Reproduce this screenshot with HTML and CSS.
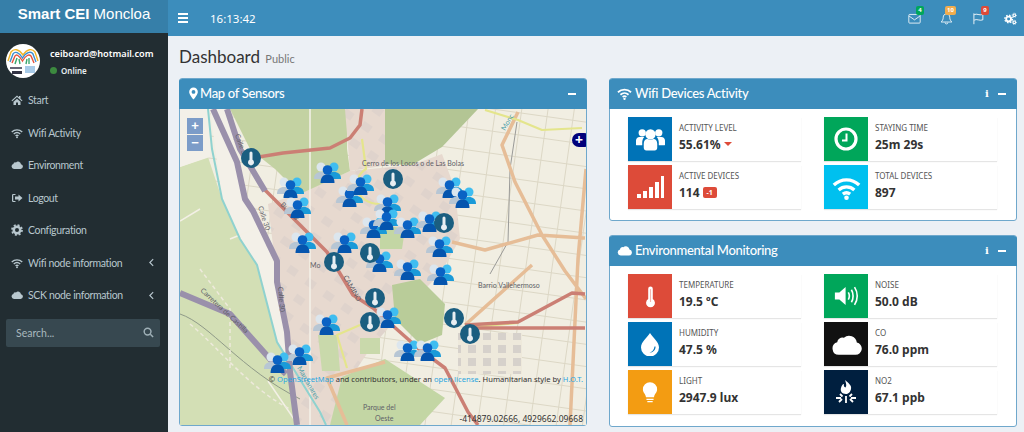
FILE: index.html
```html
<!DOCTYPE html>
<html lang="en">

<head>
    <meta charset="UTF-8">
    <meta name="viewport" content="width=device-width, initial-scale=1.0">
    <title>Smart CEI Moncloa</title>
    <link rel="stylesheet" href="styles.css">
</head>

<body>
    <!-- icon set -->
    <svg class="icon-defs" aria-hidden="true">
        <symbol id="i-home" viewBox="0 0 24 24"><path d="M12 3 1 13l1.500 1.600L12 6.200l9.500 8.400L23 13l-4-3.600V4h-3v2.700zM5 15.500V22h5v-5h4v5h5v-6.500l-7-6.200z" /></symbol>
        <symbol id="i-wifi" viewBox="0 0 24 24"><g fill="none" stroke="currentColor" stroke-width="2.800"><path d="M1.500 10C7.500 4.300 16.500 4.300 22.500 10" /><path d="M5.500 14c3.700-3.300 9.300-3.300 13 0" /><path d="M9 17.500c1.800-1.400 4.200-1.400 6 0" /></g><circle cx="12" cy="20.500" r="1.900" /></symbol>
        <symbol id="i-cloud" viewBox="0 0 24 24"><path d="M6 20a5 5 0 0 1-1.200-9.800A4 4 0 0 1 10 6.800 6 6 0 0 1 20 10.500 4.800 4.800 0 0 1 19 20z" /></symbol>
        <symbol id="i-logout" viewBox="0 0 24 24"><path d="M9 4H4.500A2.500 2.500 0 0 0 2 6.500v11A2.500 2.500 0 0 0 4.500 20H9v-2.200H4.500V6.200H9z" /><path d="M15 5l8 7-8 7v-4H8V9h7z" /></symbol>
        <symbol id="i-gear" viewBox="0 0 24 24"><circle cx="12" cy="12" r="6.500" fill="none" stroke="currentColor" stroke-width="5" /><circle cx="12" cy="12" r="10" fill="none" stroke="currentColor" stroke-width="3.500" stroke-dasharray="4 3.850" /></symbol>
        <symbol id="i-gears" viewBox="0 0 24 24"><circle cx="8.500" cy="13" r="4.500" fill="none" stroke="currentColor" stroke-width="3.500" /><circle cx="8.500" cy="13" r="7" fill="none" stroke="currentColor" stroke-width="2.500" stroke-dasharray="2.800 2.700" /><circle cx="19" cy="6" r="2.400" fill="none" stroke="currentColor" stroke-width="2" /><circle cx="19" cy="6" r="4" fill="none" stroke="currentColor" stroke-width="1.500" stroke-dasharray="1.500 1.640" /><circle cx="19" cy="19" r="2.400" fill="none" stroke="currentColor" stroke-width="2" /><circle cx="19" cy="19" r="4" fill="none" stroke="currentColor" stroke-width="1.500" stroke-dasharray="1.500 1.640" /></symbol>
        <symbol id="i-envelope" viewBox="0 0 24 24"><g fill="none" stroke="currentColor" stroke-width="1.500"><rect x="1.500" y="4.500" width="21" height="16" rx="1.500" /><path d="M2 7.500l10 7 10-7" /></g></symbol>
        <symbol id="i-bell" viewBox="0 0 24 24"><g fill="none" stroke="currentColor" stroke-width="1.500"><path d="M12 3.500c-4 0-6 3-6 6 0 5-2 7-4 9h20c-2-2-4-4-4-9 0-3-2-6-6-6z" /><path d="M9.500 19.500a2.500 2.500 0 0 0 5 0" /></g></symbol>
        <symbol id="i-flag" viewBox="0 0 24 24"><g fill="none" stroke="currentColor" stroke-width="1.600"><path d="M3.500 2.500v20" /><path d="M4 5c5-3 9 2 16-.5v10c-6 2.500-11-2.500-16 .5" /></g></symbol>
        <symbol id="i-marker" viewBox="0 0 24 24"><path fill-rule="evenodd" d="M12 1a8 8 0 0 0-8 8c0 5 8 14 8 14s8-9 8-14a8 8 0 0 0-8-8zm0 11.500a3.500 3.500 0 1 1 0-7 3.500 3.500 0 0 1 0 7z" /></symbol>
        <symbol id="i-users" viewBox="0 0 28 24"><circle cx="6" cy="5.500" r="3.500" /><circle cx="22" cy="5.500" r="3.500" /><path d="M0 17v-4c0-2 1.500-3.500 3.500-3.500H8C6.500 11 6 13 6 15v2.500H1C.4 17.500 0 17.300 0 17zM28 17v-4c0-2-1.500-3.500-3.500-3.500H20c1.500 1.500 2 3.500 2 5.500v2.500h5c.6 0 1-.2 1-.5z" /><circle cx="14" cy="7" r="5" /><path d="M7.500 16c0-2.500 1.500-4.500 3.500-4.500 1.800 1 4.200 1 6 0 2 0 3.500 2 3.500 4.500v4c0 1.500-1 2.500-2.500 2.500h-8C8.500 22.500 7.500 21.500 7.500 20z" /></symbol>
        <symbol id="i-clock" viewBox="0 0 24 24"><circle cx="12" cy="12" r="10" fill="none" stroke="currentColor" stroke-width="3.200" /><path d="M12.500 6.500v7H8" fill="none" stroke="currentColor" stroke-width="2" /></symbol>
        <symbol id="i-signal" viewBox="0 0 28 24"><rect x="1" y="19" width="4" height="4" /><rect x="7" y="16" width="4" height="7" /><rect x="13" y="12" width="4" height="11" /><rect x="19" y="7" width="4" height="16" /><rect x="25" y="1" width="3" height="22" /></symbol>
        <symbol id="i-thermo" viewBox="0 0 12 24"><path d="M6 1a2.500 2.500 0 0 0-2.500 2.500v11.300a4.800 4.800 0 1 0 5 0V3.500A2.500 2.500 0 0 0 6 1z" /><path d="M6 4v14" stroke="#f2b6ae" stroke-width="1.200" /></symbol>
        <symbol id="i-volume" viewBox="0 0 28 24"><path d="M1 8h5l7-6v20l-7-6H1z" /><g fill="none" stroke="currentColor" stroke-width="1.800"><path d="M16 8c1.500 2.500 1.500 5.500 0 8" /><path d="M19.500 5c2.500 4 2.500 10 0 14" /><path d="M23 2c4 6 4 14 0 20" /></g></symbol>
        <symbol id="i-tint" viewBox="0 0 20 24"><path fill-rule="evenodd" d="M10 1C7 6 1 10 1 15.500a9 9 0 0 0 18 0C19 10 13 6 10 1zM15.500 14.500c.3 3-2 6-6 6.300 3-1 4.700-3.300 5-6.300z" /></symbol>
        <symbol id="i-bulb" viewBox="0 0 18 24"><path d="M9 1a8 8 0 0 0-8 8c0 4 3 5 3.500 9h9C14 14 17 13 17 9a8 8 0 0 0-8-8zM5 19.500h8V21H5zM6 22h6v1.500H6z" /></symbol>
        <symbol id="i-fire" viewBox="0 0 24 24"><path d="M11 0c3 3 7 5 6 9-.5 2.500-2 5-5 5-4 0-6-3-5-6 .5-2 1.500-4 3-4-.5 1.500 0 3 1.500 3.500C13 6 12 3 11 0z" /><g fill="none" stroke="currentColor" stroke-width="1.800"><path d="M12 16v7" /><path d="M6 14l2.500 2.500M18 14l-2.500 2.500" /><path d="M2 18h5M17 18h5" /><path d="M5 22l3-3M19 22l-3-3" /></g></symbol>
        <symbol id="i-people" viewBox="0 0 27 21">
            <circle cx="7" cy="5" r="4.500" fill="#dce6ee" /><path d="M0 17c0-5 3-7 7-7s7 2 7 7z" fill="#b7c6d4" />
            <circle cx="20" cy="5" r="4.500" fill="#3fbdf0" /><path d="M13 17c0-5 3-7 7-7s7 2 7 7z" fill="#1a9ad8" />
            <circle cx="13.500" cy="8" r="4.800" fill="#0a62c4" /><path d="M6.500 21c0-6 3-8.500 7-8.500s7 2.500 7 8.500z" fill="#0555ae" />
        </symbol>
        <symbol id="i-pin" viewBox="0 0 20 20">
            <circle cx="10" cy="10" r="10" fill="#1b5e80" />
            <path d="M10 3.500A1.500 1.500 0 0 0 8.500 5v6.800a3 3 0 1 0 3 0V5A1.500 1.500 0 0 0 10 3.500z" fill="#e8eef2" />
        </symbol>
    </svg>

    <div class="page">
        <aside class="sidebar">
            <div class="logo"><b>Smart CEI</b> Moncloa</div>
            <div class="user">
                <svg class="avatar" viewBox="0 0 34 34">
                    <circle cx="17" cy="17" r="17" fill="#fff" />
                    <g fill="none" stroke-width="1.400">
                        <path d="M2 17 5 8C8 4 13 5 17 11 21 5 26 4 29 8L32 17" stroke="#f0b429" />
                        <path d="M4 18 7 10C9 7 13 8 16.500 14 20 8 25 7 27 10L30 18" stroke="#3b8fd0" />
                        <path d="M6 19 9 12C10 10 13 11 16.500 17 20 11 23 10 25 12L28 19" stroke="#e5533d" />
                        <path d="M9 20 11 14M14 20 13 15M23 20 23 14M20 20 21 15" stroke="#3aa76d" />
                    </g>
                    <rect x="4" y="23" width="12" height="2" fill="#667" />
                    <rect x="6" y="27" width="10" height="3" fill="#334" />
                    <rect x="19" y="22" width="10" height="7" fill="#a8cbe8" />
                </svg>
                <div class="user-info">
                    <div class="user-name">ceiboard@hotmail.com</div>
                    <div class="user-status"><span class="dot"></span>Online</div>
                </div>
            </div>
            <ul class="nav">
                <li><svg class="nav-icon"><use href="#i-home" /></svg>Start</li>
                <li><svg class="nav-icon"><use href="#i-wifi" /></svg>Wifi Activity</li>
                <li><svg class="nav-icon"><use href="#i-cloud" /></svg>Environment</li>
                <li><svg class="nav-icon"><use href="#i-logout" /></svg>Logout</li>
                <li><svg class="nav-icon"><use href="#i-gear" /></svg>Configuration</li>
                <li><svg class="nav-icon"><use href="#i-wifi" /></svg>Wifi node information<svg class="chevron" viewBox="0 0 6 10"><path d="M5 1 1 5l4 4" /></svg></li>
                <li><svg class="nav-icon"><use href="#i-cloud" /></svg>SCK node information<svg class="chevron" viewBox="0 0 6 10"><path d="M5 1 1 5l4 4" /></svg></li>
            </ul>
            <div class="search">
                <span>Search...</span>
                <svg class="search-icon" viewBox="0 0 12 12"><circle cx="5" cy="5" r="3.700" /><path d="M8 8l3 3" /></svg>
            </div>
        </aside>

        <div class="main">
            <header class="topbar">
                <div class="burger"><span></span><span></span><span></span></div>
                <div class="clock">16:13:42</div>
                <div class="top-icons">
                    <div class="top-item"><svg class="top-icon"><use href="#i-envelope" /></svg><span class="badge green">4</span></div>
                    <div class="top-item"><svg class="top-icon"><use href="#i-bell" /></svg><span class="badge orange">10</span></div>
                    <div class="top-item"><svg class="top-icon"><use href="#i-flag" /></svg><span class="badge red">9</span></div>
                    <div class="top-item"><svg class="top-icon"><use href="#i-gears" /></svg></div>
                </div>
            </header>

            <div class="content">
                <h1>Dashboard <small>Public</small></h1>
                <div class="columns">
                    <section class="box map-box">
                        <div class="box-header">
                            <svg class="box-icon"><use href="#i-marker" /></svg>
                            <h2>Map of Sensors</h2>
                            <span class="tool-minus"></span>
                        </div>
                        <div class="map">
                            <svg class="map-svg" viewBox="0 0 406 316">
                                <defs>
                                    <pattern id="city" width="26" height="22" patternUnits="userSpaceOnUse" patternTransform="rotate(8)">
                                        <rect width="26" height="22" fill="#f1eee2" />
                                        <path d="M0 .5H26M.5 0V22" stroke="#dcd7c5" stroke-width="1" />
                                    </pattern>
                                    <pattern id="blocks" width="15" height="13" patternUnits="userSpaceOnUse">
                                        <rect width="15" height="13" fill="#eee9db" />
                                        <rect x="3" y="2" width="8" height="8" fill="#d6d1cb" />
                                    </pattern>
                                    <pattern id="urban" width="22" height="20" patternUnits="userSpaceOnUse" patternTransform="rotate(35)">
                                        <rect width="22" height="20" fill="#e7d9cf" />
                                        <rect x="4" y="4" width="10" height="8" fill="#dfd3cc" />
                                    </pattern>
                                </defs>
                                <rect width="406" height="316" fill="url(#city)" />
                                <!-- parks and built up areas -->
                                <path d="M0 58 28 48 32 60 42 90 60 130 77 156 97 233 113 259 140 316H0z" fill="#d3dfb5" />
                                <path d="M0 0H30V48L0 58z" fill="#f3f0e8" />
                                <path d="M30 0H47L65 90 97 160 110 265 117 316H146L97 233 77 156 60 130 42 90z" fill="#f3f0e8" />
                                <path d="M88 95 120 84 170 62 232 56 262 45 275 80 280 130 260 165 225 200 190 240 170 270 150 316H118L110 260 97 170z" fill="url(#urban)" />
                                <path d="M50 0H167V40L170 62 120 85 95 60 70 40z" fill="#c3d2a2" />
                                <path d="M165 0H208V56L170 62z" fill="url(#urban)" />
                                <path d="M205 0H298L262 38 232 56 205 55z" fill="#b3c594" />
                                <path d="M212 176 240 170 265 195 262 226 240 235 215 210z" fill="#b9cc99" />
                                <path d="M150 316 162 268 205 250 265 289 240 316z" fill="#c3d6a4" />
                                <path d="M200 115 225 120 222 140 200 140z" fill="#c3d6a4" />
                                <path d="M138 226H157L160 262 142 262z" fill="#c9d9ab" />
                                <path d="M180 229H200V245H180z" fill="#c9d9ab" />
                                <path d="M278 224H342V265H278z" fill="url(#blocks)" />
                                <path d="M130 0V316" stroke="#f4f2ea" stroke-width="1.500" />
                                <path d="M0 112 20 100M50 130 80 118M118 316 88 272" stroke="#f3f0e6" stroke-width="1.500" fill="none" />
                                <path d="M0 205C30 215 60 260 120 290" stroke="#8f9a88" stroke-width="1" fill="none" />
                                <path d="M10 215C40 240 70 280 110 300M20 160 50 200 50 260" stroke="#eeeadc" stroke-width="1.500" stroke-dasharray="4 3" fill="none" />
                                <path d="M337 13 330 60 328 133 310 165" stroke="#9a9a98" stroke-width="1" fill="none" />
                                <!-- river -->
                                <path d="M28 0 32 40 42 90 60 130 77 156 97 233 113 259 140 303 146 316" stroke="#8fd2cf" stroke-width="2" fill="none" />
                                <!-- roads -->
                                <g fill="none" stroke-linejoin="round">
                                    <path d="M338 3 322 36 335 73 362 126 385 162 406 190M352 156 285 216M272 133 305 141 358 126 405 129M406 60 398 150 390 316M167 316 147 269 205 253" stroke="#e6bd97" stroke-width="3.500" />
                                    <path d="M305 1 338 11 362 21 402 19M295 218 338 214M180 216 157 226 167 259M182 30 186 60C170 70 175 95 200 95" stroke="#e4e58c" stroke-width="2.200" />
                                    <path d="M72 49 103 44 150 39 170 29 180 16 182 0M83 79 147 143 173 186 193 199 212 216 238 239 265 259 288 303 298 316M285 216 338 213 392 184 405 185M295 219H405" stroke="#cb7f74" stroke-width="3.500" />
                                    <path d="M33 0 57 53 65 90 73 102 97 152 97 173 107 223 110 263 117 316M47 0 60 40 85 82M0 184 50 205 90 250 106 265" stroke="#9a90ab" stroke-width="6" />
                                </g>
                                <!-- labels -->
                                <g class="map-label">
                                    <text transform="translate(55 26) rotate(70)">Calle 30</text>
                                    <text transform="translate(78 98) rotate(72)">Calle 30</text>
                                    <text transform="translate(98 178) rotate(85)">Calle 30</text>
                                    <text transform="translate(20 182) rotate(43)">Carretera de Castilla</text>
                                    <text transform="translate(100 96) rotate(45)">Bulevar</text>
                                    <text transform="translate(163 168) rotate(60)">CAMINO</text>
                                    <text transform="translate(117 259) rotate(60)" class="water">Manzanares</text>
                                    <text transform="translate(325 22) rotate(-60)" class="water">Monc</text>
                                    <text x="130" y="159">Mo</text>
                                    <text x="182" y="57">Cerro de los Locos o de Las Bolas</text>
                                    <text x="298" y="179">Barrio Vallehermoso</text>
                                    <text x="183" y="301">Parque del</text>
                                    <text x="195" y="312">Oeste</text>
                                </g>
                                <!-- sensors -->
                                <g>
                                    <use href="#i-people" x="134" y="53" width="27" height="21" />
                                    <use href="#i-people" x="97" y="68" width="27" height="21" />
                                    <use href="#i-people" x="104" y="88" width="27" height="21" />
                                    <use href="#i-people" x="156" y="77" width="27" height="21" />
                                    <use href="#i-people" x="167" y="65" width="27" height="21" />
                                    <use href="#i-people" x="194" y="85" width="27" height="21" />
                                    <use href="#i-people" x="109" y="123" width="27" height="21" />
                                    <use href="#i-people" x="151" y="123" width="27" height="21" />
                                    <use href="#i-people" x="180" y="108" width="27" height="21" />
                                    <use href="#i-people" x="193" y="100" width="27" height="21" />
                                    <use href="#i-people" x="214" y="108" width="27" height="21" />
                                    <use href="#i-people" x="236" y="102" width="27" height="21" />
                                    <use href="#i-people" x="246" y="127" width="27" height="21" />
                                    <use href="#i-people" x="256" y="68" width="27" height="21" />
                                    <use href="#i-people" x="269" y="78" width="27" height="21" />
                                    <use href="#i-people" x="214" y="150" width="27" height="21" />
                                    <use href="#i-people" x="247" y="155" width="27" height="21" />
                                    <use href="#i-people" x="186" y="142" width="27" height="21" />
                                    <use href="#i-people" x="133" y="205" width="27" height="21" />
                                    <use href="#i-people" x="194" y="198" width="27" height="21" />
                                    <use href="#i-people" x="106" y="235" width="27" height="21" />
                                    <use href="#i-people" x="84" y="243" width="27" height="21" />
                                    <use href="#i-people" x="214" y="231" width="27" height="21" />
                                    <use href="#i-people" x="234" y="231" width="27" height="21" />
                                    <use href="#i-pin" x="61" y="39" width="20" height="20" />
                                    <use href="#i-pin" x="203" y="60" width="20" height="20" />
                                    <use href="#i-pin" x="254" y="104" width="20" height="20" />
                                    <use href="#i-pin" x="180" y="134" width="20" height="20" />
                                    <use href="#i-pin" x="144" y="143" width="20" height="20" />
                                    <use href="#i-pin" x="185" y="179" width="20" height="20" />
                                    <use href="#i-pin" x="180" y="203" width="20" height="20" />
                                    <use href="#i-pin" x="264" y="199" width="20" height="20" />
                                    <use href="#i-pin" x="280" y="215" width="20" height="20" />
                                </g>
                            </svg>
                            <div class="zoom-ctl"><span>+</span><span>&minus;</span></div>
                            <div class="map-plus">+</div>
                            <div class="attribution">&copy; <a>OpenStreetMap</a> and contributors, under an <a>open license</a>. Humanitarian style by <a>H.O.T.</a></div>
                            <div class="coords">-414879.02666, 4929662.09668</div>
                        </div>
                    </section>

                    <div class="side">
                        <section class="box wifi-box">
                            <div class="box-header">
                                <svg class="box-icon wide"><use href="#i-wifi" /></svg>
                                <h2>Wifi Devices Activity</h2>
                                <span class="tool-info">i</span>
                                <span class="tool-minus"></span>
                            </div>
                            <div class="stats">
                                <div class="stat">
                                    <div class="stat-icon blue"><svg class="glyph g-users"><use href="#i-users" /></svg></div>
                                    <div class="stat-text"><div class="stat-label">Activity Level</div><div class="stat-value">55.61% <span class="caret"></span></div></div>
                                </div>
                                <div class="stat">
                                    <div class="stat-icon green"><svg class="glyph g-clock"><use href="#i-clock" /></svg></div>
                                    <div class="stat-text"><div class="stat-label">Staying Time</div><div class="stat-value">25m 29s</div></div>
                                </div>
                                <div class="stat">
                                    <div class="stat-icon red"><svg class="glyph g-signal"><use href="#i-signal" /></svg></div>
                                    <div class="stat-text"><div class="stat-label">Active Devices</div><div class="stat-value">114 <span class="delta">-1</span></div></div>
                                </div>
                                <div class="stat">
                                    <div class="stat-icon sky"><svg class="glyph g-wifi"><use href="#i-wifi" /></svg></div>
                                    <div class="stat-text"><div class="stat-label">Total Devices</div><div class="stat-value">897</div></div>
                                </div>
                            </div>
                        </section>

                        <section class="box env-box">
                            <div class="box-header">
                                <svg class="box-icon wide"><use href="#i-cloud" /></svg>
                                <h2>Environmental Monitoring</h2>
                                <span class="tool-info">i</span>
                                <span class="tool-minus"></span>
                            </div>
                            <div class="stats">
                                <div class="stat">
                                    <div class="stat-icon red"><svg class="glyph g-thermo"><use href="#i-thermo" /></svg></div>
                                    <div class="stat-text"><div class="stat-label">Temperature</div><div class="stat-value">19.5 ºC</div></div>
                                </div>
                                <div class="stat">
                                    <div class="stat-icon green"><svg class="glyph g-volume"><use href="#i-volume" /></svg></div>
                                    <div class="stat-text"><div class="stat-label">Noise</div><div class="stat-value">50.0 dB</div></div>
                                </div>
                                <div class="stat">
                                    <div class="stat-icon blue"><svg class="glyph g-tint"><use href="#i-tint" /></svg></div>
                                    <div class="stat-text"><div class="stat-label">Humidity</div><div class="stat-value">47.5 %</div></div>
                                </div>
                                <div class="stat">
                                    <div class="stat-icon black"><svg class="glyph g-cloud"><use href="#i-cloud" /></svg></div>
                                    <div class="stat-text"><div class="stat-label">CO</div><div class="stat-value">76.0 ppm</div></div>
                                </div>
                                <div class="stat">
                                    <div class="stat-icon orange"><svg class="glyph g-bulb"><use href="#i-bulb" /></svg></div>
                                    <div class="stat-text"><div class="stat-label">Light</div><div class="stat-value">2947.9 lux</div></div>
                                </div>
                                <div class="stat">
                                    <div class="stat-icon navy"><svg class="glyph g-fire"><use href="#i-fire" /></svg></div>
                                    <div class="stat-text"><div class="stat-label">NO2</div><div class="stat-value">67.1 ppb</div></div>
                                </div>
                            </div>
                        </section>
                    </div>
                </div>
            </div>
        </div>
    </div>
</body>

</html>
```

FILE: styles.css
```css
* {
    box-sizing: border-box;
}

html,
body {
    margin: 0;
    height: 100%;
    overflow: hidden;
}

body {
    font-family: "Noto Sans", "Open Sans", sans-serif;
    color: #333;
    background-color: #ecf0f5;
}

svg {
    fill: currentColor;
}

.icon-defs {
    display: none;
}

.page {
    display: flex;
    height: 432px;
}

/* sidebar */
.sidebar {
    width: 168px;
    flex: none;
    background-color: #222d32;
    color: #b8c7ce;
}

.logo {
    height: 33px;
    background-color: #367fa9;
    color: #fff;
    font-family: "Liberation Sans", Arial, sans-serif;
    font-size: 15px;
    line-height: 28px;
    text-align: center;
}

.user {
    display: flex;
    align-items: center;
    height: 51px;
    padding: 5px 0 0 6px;
}

.avatar {
    width: 34px;
    height: 34px;
    margin-right: 10px;
}

.user-name {
    color: #fff;
    font-size: 9.2px;
    font-weight: 600;
    line-height: 14px;
    margin-top: 1px;
}

.user-status {
    display: flex;
    align-items: center;
    color: #e8eef0;
    font-size: 8px;
    font-weight: 600;
    margin-top: 4px;
}

.dot {
    width: 7px;
    height: 7px;
    margin-right: 4px;
    border-radius: 50%;
    background-color: #3c8a3f;
}

.nav {
    list-style: none;
    margin: 0;
    padding: 0;
    font-family: Lato, "Noto Sans", sans-serif;
}

.nav li {
    display: flex;
    align-items: center;
    height: 32.5px;
    padding-left: 11px;
    font-size: 10.5px;
    letter-spacing: -0.35px;
}

.nav-icon {
    width: 12px;
    height: 12px;
    margin-right: 5px;
    flex: none;
}

.chevron {
    width: 5px;
    height: 9px;
    margin-left: auto;
    margin-right: 14px;
    fill: none;
    stroke: #b8c7ce;
    stroke-width: 1.4;
}

.search {
    display: flex;
    align-items: center;
    justify-content: space-between;
    height: 28px;
    margin: 7px 8px 0 6px;
    padding: 0 6px 0 10px;
    background-color: #374850;
    border-radius: 2px;
    color: #a9b8be;
    font-family: Lato, "Noto Sans", sans-serif;
    font-size: 10.5px;
}

.search-icon {
    width: 11px;
    height: 11px;
    fill: none;
    stroke: #9fb0b7;
    stroke-width: 1.6;
}

/* top bar */
.main {
    flex: 1;
    min-width: 0;
}

.topbar {
    display: flex;
    align-items: center;
    height: 36px;
    background-color: #3c8dbc;
    color: #fff;
}

.burger {
    display: flex;
    flex-direction: column;
    gap: 2px;
    width: 10px;
    margin-left: 10px;
}

.burger span {
    height: 2px;
    background-color: #fff;
}

.clock {
    margin-left: 22px;
    font-size: 11.5px;
}

.top-icons {
    display: flex;
    margin-left: auto;
    margin-right: -2px;
}

.top-item {
    position: relative;
    display: flex;
    justify-content: center;
    width: 32px;
}

.top-icon {
    width: 13px;
    height: 13px;
}

.badge {
    position: absolute;
    top: -6px;
    left: 18px;
    min-width: 8px;
    padding: 0 2px;
    border-radius: 2px;
    color: #fff;
    font-size: 6px;
    font-weight: 700;
    line-height: 9px;
    text-align: center;
}

.badge.green {
    background-color: #00a65a;
}

.badge.orange {
    left: 15px;
    background-color: #f0ad4e;
}

.badge.red {
    left: 19px;
    background-color: #dd4b39;
}

/* content */
.content {
    padding: 0 7px 0 11px;
}

h1 {
    margin: 0;
    height: 42px;
    color: #333;
    font-family: Lato, "Noto Sans", sans-serif;
    font-size: 17px;
    font-weight: 400;
    line-height: 42px;
}

h1 small {
    margin-left: 1px;
    color: #777;
    font-size: 11px;
}

.columns {
    display: flex;
    gap: 22px;
}

.side {
    display: flex;
    flex-direction: column;
    gap: 14px;
    width: 408px;
}

.box {
    width: 408px;
    background-color: #fff;
    border: 1px solid #6fa8cc;
    border-radius: 3px;
}

.map-box {
    height: 348px;
}

.wifi-box {
    height: 143px;
}

.env-box {
    height: 192px;
}

.box-header {
    display: flex;
    align-items: center;
    height: 30px;
    margin: 0 -1px;
    padding: 0 11px 1px 8px;
    background-color: #3c8dbc;
    color: #fff;
    border-radius: 3px 3px 0 0;
}

.box-header h2 {
    flex: 1;
    margin: -2px 0 0 3px;
    font-family: Lato, "Noto Sans", sans-serif;
    font-size: 13px;
    font-weight: 500;
    letter-spacing: -0.3px;
}

.map-box h2 {
    margin-left: 0;
}

.box-icon {
    width: 13px;
    height: 13px;
    flex: none;
}

.box-icon.wide {
    width: 15px;
    height: 15px;
}

.tool-info {
    width: 8px;
    margin-right: 7px;
    font-family: "DejaVu Serif", serif;
    font-size: 10px;
    font-weight: 700;
    text-align: center;
}

.tool-minus {
    width: 8px;
    height: 2px;
    background-color: #fff;
}

/* stat rows */
.stats {
    display: grid;
    grid-template-columns: 173px 173px;
    gap: 4px 23px;
    padding: 8px 18px;
}

.stat {
    display: flex;
    align-items: center;
    height: 44px;
    background-color: #fff;
    box-shadow: 0 1px 1px rgba(0, 0, 0, 0.1);
}

.stat-text {
    padding-bottom: 5px;
}

.stat-icon {
    display: flex;
    align-items: center;
    justify-content: center;
    width: 44px;
    height: 44px;
    margin-right: 7px;
    flex: none;
    color: #fff;
}

.stat-icon.blue {
    background-color: #0073b7;
}

.stat-icon.green {
    background-color: #00a65a;
}

.stat-icon.red {
    background-color: #dd4b39;
}

.stat-icon.sky {
    background-color: #00c0ef;
}

.stat-icon.black {
    background-color: #111;
}

.stat-icon.orange {
    background-color: #f39c12;
}

.stat-icon.navy {
    background-color: #001f3f;
}

.stat-label {
    color: #555;
    font-size: 8px;
    line-height: 12px;
    text-transform: uppercase;
}

.stat-value {
    display: flex;
    align-items: center;
    gap: 3px;
    margin-top: 3px;
    color: #333;
    font-size: 12px;
    font-weight: 700;
    line-height: 15px;
}

.caret {
    width: 0;
    height: 0;
    border-left: 4px solid transparent;
    border-right: 4px solid transparent;
    border-top: 4px solid #dd4b39;
}

.delta {
    padding: 0 4px;
    border-radius: 2px;
    background-color: #dd4b39;
    color: #fff;
    font-size: 7px;
    line-height: 11px;
}

.g-users {
    width: 29px;
    height: 25px;
}

.g-clock {
    width: 24px;
    height: 24px;
}

.g-signal {
    width: 28px;
    height: 24px;
}

.g-wifi {
    width: 29px;
    height: 29px;
}

.g-thermo {
    width: 11px;
    height: 25px;
}

.g-volume {
    width: 25px;
    height: 22px;
}

.g-tint {
    width: 20px;
    height: 24px;
}

.g-cloud {
    width: 31px;
    height: 31px;
}

.g-bulb {
    width: 16px;
    height: 24px;
}

.g-fire {
    width: 24px;
    height: 24px;
}

/* map */
.map {
    position: relative;
    height: 316px;
    overflow: hidden;
}

.map-svg {
    display: block;
    width: 406px;
    height: 316px;
}

.map-label {
    fill: #5f5f68;
    font-family: Lato, "Noto Sans", sans-serif;
    font-size: 7px;
}

.map-label .water {
    fill: #4f9fa8;
}

.zoom-ctl {
    position: absolute;
    top: 9px;
    left: 7px;
    display: flex;
    flex-direction: column;
    gap: 1px;
    width: 16px;
}

.zoom-ctl span {
    height: 16px;
    background-color: #7c9cc8;
    color: #fff;
    font-family: "Liberation Sans", Arial, sans-serif;
    font-size: 13px;
    font-weight: 700;
    line-height: 15px;
    text-align: center;
}

.map-plus {
    position: absolute;
    top: 24px;
    right: -5px;
    width: 19px;
    height: 14px;
    border-radius: 7px;
    background-color: #00007a;
    color: #fff;
    font-size: 14px;
    font-weight: 700;
    line-height: 13px;
    padding-left: 3px;
}

.attribution {
    position: absolute;
    top: 265px;
    right: 3px;
    color: #333;
    font-size: 7.6px;
    white-space: nowrap;
}

.attribution a {
    color: #2ba6e0;
}

.coords {
    position: absolute;
    right: 3px;
    bottom: 1px;
    color: #333;
    font-size: 8.5px;
    white-space: nowrap;
}
```
